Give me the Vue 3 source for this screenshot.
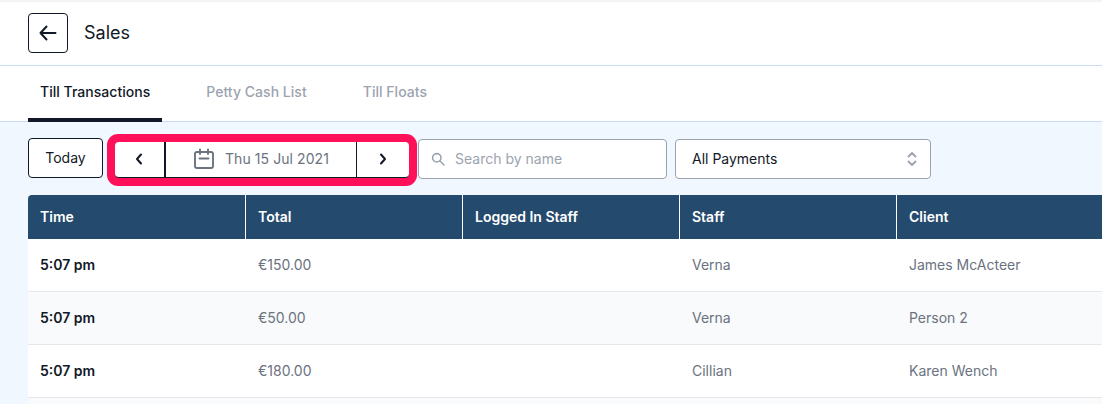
<script setup>
const tabs = ['Till Transactions', 'Petty Cash List', 'Till Floats']
const columns = ['Time', 'Total', 'Logged In Staff', 'Staff', 'Client']
const rows = [
  { time: '5:07 pm', total: '€150.00', logged: '', staff: 'Verna', client: 'James McActeer' },
  { time: '5:07 pm', total: '€50.00', logged: '', staff: 'Verna', client: 'Person 2' },
  { time: '5:07 pm', total: '€180.00', logged: '', staff: 'Cillian', client: 'Karen Wench' },
  { time: '', total: '', logged: '', staff: '', client: '' }
]
</script>

<template>
  <div class="page">
    <header class="header">
      <button class="back" aria-label="Back">
        <svg width="20" height="20" viewBox="0 0 20 20" fill="none" stroke="#111827" stroke-width="2" stroke-linecap="round" stroke-linejoin="round">
          <path d="M17.5 10H2.5M8.5 3.5 2.5 10l6 6.5" />
        </svg>
      </button>
      <h1 class="title">Sales</h1>
    </header>

    <nav class="tabs">
      <a v-for="(tab, i) in tabs" :key="tab" class="tab" :class="{ active: i === 0 }">{{ tab }}</a>
    </nav>

    <main class="content">
      <div class="toolbar">
        <button class="today">Today</button>
        <div class="date-group">
          <button class="nav-btn prev" aria-label="Previous day">
            <svg width="10" height="12" viewBox="0 0 10 12" fill="none" stroke="#111827" stroke-width="2" stroke-linecap="round" stroke-linejoin="round"><path d="M7 1.5 3 6l4 4.5" /></svg>
          </button>
          <div class="date">
            <svg width="22" height="22" viewBox="0 0 22 22" fill="none" stroke="#6b7280" stroke-width="1.9" stroke-linecap="round" stroke-linejoin="round">
              <rect x="2" y="4" width="18" height="16" rx="2" />
              <path d="M7 1.5V6M15 1.5V6M6.5 10.5h9" />
            </svg>
            <span class="date-text">Thu 15 Jul 2021</span>
          </div>
          <button class="nav-btn next" aria-label="Next day">
            <svg width="10" height="12" viewBox="0 0 10 12" fill="none" stroke="#111827" stroke-width="2" stroke-linecap="round" stroke-linejoin="round"><path d="M3 1.5 7 6l-4 4.5" /></svg>
          </button>
        </div>
        <label class="search">
          <svg width="14" height="14" viewBox="0 0 14 14" fill="none" stroke="#9ca3af" stroke-width="1.6" stroke-linecap="round"><circle cx="5.8" cy="5.8" r="4.2" /><path d="m9 9 4 4" /></svg>
          <span>Search by name</span>
        </label>
        <div class="select">
          <span>All Payments</span>
          <svg width="10" height="16" viewBox="0 0 10 16" fill="none" stroke="#9ca3af" stroke-width="1.8" stroke-linecap="round" stroke-linejoin="round"><path d="M1.5 5.5 5 2l3.5 3.5M1.5 10.5 5 14l3.5-3.5" /></svg>
        </div>
      </div>

      <div class="table">
        <div class="row head">
          <div v-for="c in columns" :key="c" class="cell">{{ c }}</div>
        </div>
        <div v-for="(r, i) in rows" :key="i" class="row body" :class="{ alt: i % 2 === 1 }">
          <div class="cell strong">{{ r.time }}</div>
          <div class="cell">{{ r.total }}</div>
          <div class="cell">{{ r.logged }}</div>
          <div class="cell">{{ r.staff }}</div>
          <div class="cell">{{ r.client }}</div>
        </div>
      </div>
    </main>
  </div>
</template>

<style>
html, body { margin: 0; height: 100%; overflow: hidden; background: #f0f7ff; }
</style>

<style scoped>
* { box-sizing: border-box; }
.page {
  width: 1102px;
  height: 404px;
  overflow: hidden;
  display: flex;
  flex-direction: column;
  border-top: 2px solid #f3f4f6;
  font-family: Inter, "Liberation Sans", sans-serif;
  font-size: 14px;
  line-height: 20px;
  color: #111827;
  background: #f0f7ff;
}
.header {
  height: 64px;
  flex: none;
  display: flex;
  align-items: center;
  gap: 16px;
  padding: 0 28px 1px;
  background: #fff;
  border-bottom: 1px solid #c9dcf5;
}
.back {
  width: 40px;
  height: 40px;
  display: flex;
  align-items: center;
  justify-content: center;
  padding: 0;
  background: #fff;
  border: 1px solid #111827;
  border-radius: 4px;
}
.title { margin: 0; font-size: 18px; font-weight: 400; line-height: 28px; }
.tabs {
  height: 56px;
  flex: none;
  display: flex;
  gap: 32px;
  padding: 0 28px;
  background: #fff;
  border-bottom: 1px solid #c9dcf5;
}
.tab {
  height: 56px;
  padding: 16px 12px;
  font-weight: 500;
  color: #9ca3af;
  border-bottom: 4px solid transparent;
  letter-spacing: 0.002em;
}
.tab.active { color: #111827; border-bottom-color: #111827; }
.content { flex: 1; padding: 16px 0 0 28px; min-width: 0; }
.toolbar { display: flex; align-items: flex-start; height: 41px; }
.today {
  width: 75px;
  height: 40px;
  padding: 0;
  background: #fff;
  border: 1px solid #111827;
  border-radius: 4px;
  font: 400 14px/20px Inter, sans-serif;
  color: #111827;
}
.date-group {
  width: 294px;
  height: 36px;
  margin: 4px 9px 0 12px;
  display: flex;
  background: #fff;
  border-bottom: 1px solid #111827;
  border-radius: 4px;
  box-shadow: 0 0 0 8px #ff1059;
}
.nav-btn {
  flex: none;
  display: flex;
  align-items: center;
  justify-content: center;
  padding: 0 0 2px;
  background: transparent;
  border: 0;
}
.prev { width: 49px; padding-right: 2px; }
.next { width: 52px; }
.date {
  flex: 1;
  display: flex;
  align-items: center;
  gap: 10px;
  padding: 0 0 2px 27px;
  border-left: 2px solid #111827;
  border-right: 1px solid #111827;
  color: #6b7280;
}
.date-text { letter-spacing: 0.005em; }
.search, .select {
  height: 40px;
  display: flex;
  align-items: center;
  background: #fff;
  border: 1px solid #9ca3af;
  border-radius: 4px;
}
.search {
  width: 249px;
  margin-top: 1px;
  padding-left: 12px;
  gap: 10px;
  color: #9ca3af;
}
.select {
  width: 256px;
  margin: 1px 0 0 8px;
  padding: 0 13px 0 16px;
  justify-content: space-between;
  color: #111827;
}
.table { margin-top: 16px; width: 1120px; background: #fff; }
.row { display: grid; grid-template-columns: 218px repeat(4, 217px) 1fr; }
.head {
  height: 44px;
  background: #244a6e;
  color: #fff;
  font-weight: 600;
  border-radius: 4px 0 0 0;
}
.head .cell { border-right: 1px solid #fff; padding-top: 12px; padding-bottom: 12px; }
.body { height: 53px; color: #6b7280; border-bottom: 1px solid #e5e7eb; }
.body.alt { background: #f9fafb; }
.cell { padding: 16px 12px; }
.strong { color: #111827; font-weight: 600; }
</style>
